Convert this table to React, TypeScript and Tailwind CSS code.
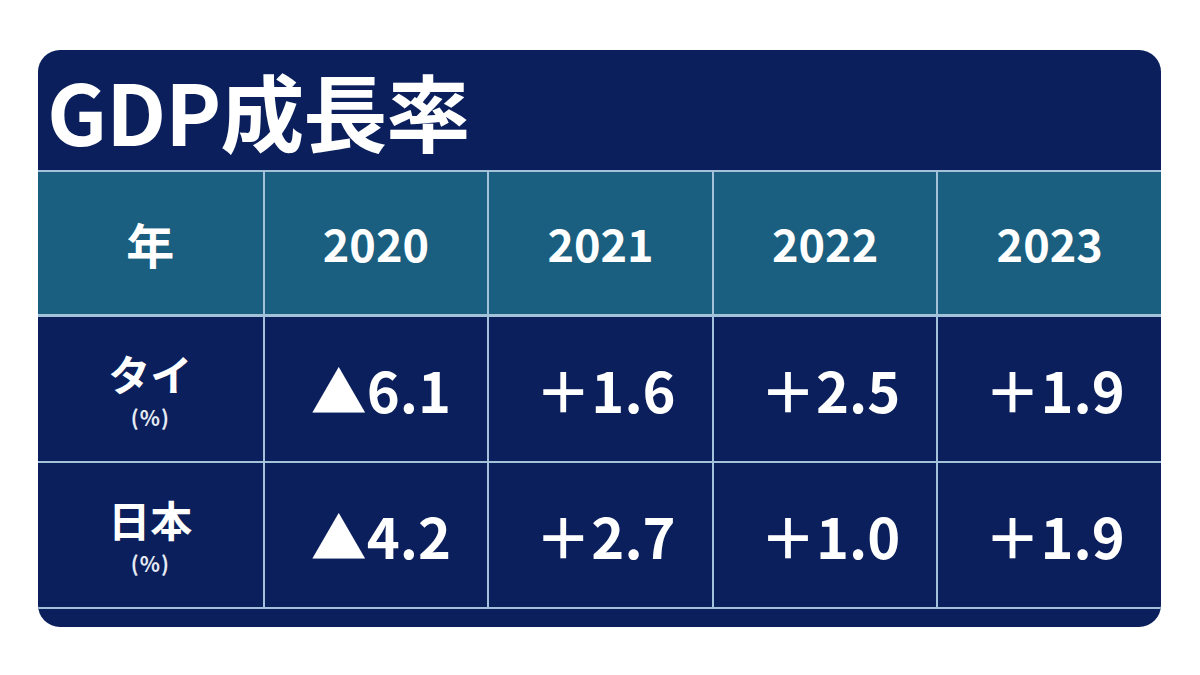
const font = { fontFamily: '"Noto Sans CJK JP", "Noto Sans", sans-serif' };

const years = ["2020", "2021", "2022", "2023"];

const rows = [
  { label: "タイ", values: ["▲6.1", "＋1.6", "＋2.5", "＋1.9"] },
  { label: "日本", values: ["▲4.2", "＋2.7", "＋1.0", "＋1.9"] },
];

export default function App() {
  return (
    <div className="min-h-[675px] w-[1200px] bg-white pl-[38px] pt-[50px]" style={font}>
      <div className="w-[1123px] overflow-hidden rounded-[22px] bg-[#0a1f5c] text-white">
        {/* title band */}
        <div className="flex h-[120px] items-center pl-[9px]">
          <h1 className="text-[84px] font-bold leading-none tracking-[-1px]">GDP成長率</h1>
        </div>

        {/* header row */}
        <div className="grid h-[147px] grid-cols-5 border-y-[3px] border-t-2 border-[#a3c1d9] bg-[#1a5f80]">
          <div className="flex items-center justify-center text-[48px] font-bold">年</div>
          {years.map((y) => (
            <div
              key={y}
              className="flex items-center justify-center border-l-2 border-[#a3c1d9] text-[45px] font-bold"
            >
              {y}
            </div>
          ))}
        </div>

        {/* data rows */}
        {rows.map((r) => (
          <div key={r.label} className="grid h-[146px] grid-cols-5 border-b-2 border-[#a3c1d9]">
            <div className="flex flex-col items-center justify-center">
              <span className="text-[42px] font-bold leading-[1.2]">{r.label}</span>
              <span className="mt-[6px] text-[21px] font-bold leading-[1.2] tracking-[1px] text-[#e4eaf3]">(%)</span>
            </div>
            {r.values.map((v, i) => (
              <div
                key={i}
                className="flex items-center justify-center border-l-2 border-[#a3c1d9] pl-[10px] text-[56px] font-bold leading-none"
              >
                {v}
              </div>
            ))}
          </div>
        ))}

        <div className="h-[18px]" />
      </div>
    </div>
  );
}
